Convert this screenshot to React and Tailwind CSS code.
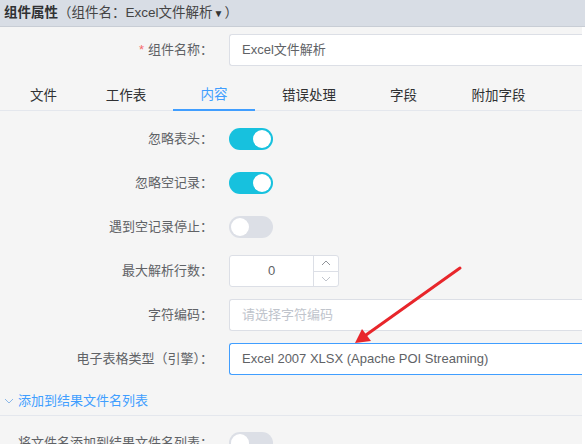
import React from 'react';

const labelCls = "w-[213px] shrink-0 text-right text-[13px] text-[#606266]";

function Toggle({ on }) {
  return (
    <div className={`relative w-[44px] h-[22px] rounded-full ${on ? 'bg-[#17c1de]' : 'bg-[#dcdfe6]'}`}>
      <div className={`absolute top-[2px] w-[18px] h-[18px] rounded-full bg-white ${on ? 'left-[24px]' : 'left-[2px]'}`} />
    </div>
  );
}

function Row({ label, children, required }) {
  return (
    <div className="flex items-center h-[32px] mb-[12px]">
      <div className={labelCls}>
        {required && <span className="text-[#f56c6c] mr-[4px]">*</span>}
        {label}
      </div>
      <div className="ml-[16px] flex-1 flex items-center">{children}</div>
    </div>
  );
}

const tabs = [
  { name: '文件', cls: 'w-[81px]' },
  { name: '工作表', cls: 'w-[84px] mr-[5px]' },
  { name: '内容', cls: 'w-[82px]', active: true },
  { name: '错误处理', cls: 'w-[108px]' },
  { name: '字段', cls: 'w-[81px]' },
  { name: '附加字段', cls: 'w-[109px]' },
];

export default function App() {
  return (
    <div className="relative w-[585px] h-[444px] overflow-hidden bg-[#f5f5f5] font-['Liberation_Sans','Noto_Sans_CJK_SC',sans-serif]">
      {/* header */}
      <div className="h-[27px] bg-[#d8dde5] border-b border-[#c8cdd5] flex items-center pl-[4px] text-[13.5px] text-[#303133]">
        <span className="font-bold">组件属性</span>
        <span className="text-[#444]">（组件名：Excel文件解析</span>
        <span className="text-[10px] text-[#333] mx-[1px]">▼</span>
        <span className="text-[#444]">）</span>
      </div>

      <div className="w-[582px] border-r-[3px] border-white box-content">
        <div className="pt-[7px]">
          <Row label="组件名称：" required>
            <div className="w-full h-[32px] bg-white border border-[#dcdfe6] border-r-0 rounded-l-[3px] flex items-center px-[12px] text-[13px] text-[#606266]">
              Excel文件解析
            </div>
          </Row>
        </div>

        {/* tabs */}
        <div className="flex pl-[3px] h-[33px] border-b border-[#e4e7ed]">
          {tabs.map((t) => (
            <div
              key={t.name}
              className={`${t.cls} h-[33px] pt-[3px] flex items-center justify-center text-[13.5px] ${t.active ? 'text-[#409eff] border-b-2 border-[#409eff]' : 'text-[#303133]'}`}
            >
              {t.name}
            </div>
          ))}
        </div>

        <div className="pt-[12px]">
          <Row label="忽略表头：">
            <Toggle on />
          </Row>
          <Row label="忽略空记录：">
            <Toggle on />
          </Row>
          <Row label="遇到空记录停止：">
            <Toggle />
          </Row>
          <Row label="最大解析行数：">
            <div className="w-[110px] h-[32px] bg-white border border-[#dcdfe6] rounded-[3px] flex">
              <div className="flex-1 flex items-center justify-center text-[13px] text-[#606266]">0</div>
              <div className="w-[25px] border-l border-[#dcdfe6] flex flex-col">
                <div className="flex-1 flex items-center justify-center border-b border-[#dcdfe6]">
                  <svg width="10" height="6" viewBox="0 0 10 6"><path d="M1 5L5 1L9 5" fill="none" stroke="#909399" strokeWidth="1" /></svg>
                </div>
                <div className="flex-1 flex items-center justify-center">
                  <svg width="10" height="6" viewBox="0 0 10 6"><path d="M1 1L5 5L9 1" fill="none" stroke="#c0c4cc" strokeWidth="1" /></svg>
                </div>
              </div>
            </div>
          </Row>
          <Row label="字符编码：">
            <div className="w-full h-[32px] bg-white border border-[#dcdfe6] border-r-0 rounded-l-[3px] flex items-center px-[12px] text-[13px] text-[#c0c4cc]">
              请选择字符编码
            </div>
          </Row>
          <Row label="电子表格类型（引擎）：">
            <div className="w-full h-[32px] bg-white border border-[#409eff] border-r-0 rounded-l-[3px] flex items-center px-[12px] text-[13px] text-[#606266]">
              Excel 2007 XLSX (Apache POI Streaming)
            </div>
          </Row>
        </div>

        <div className="h-[28px] flex items-center pl-[4px] text-[13px] text-[#409eff]">
          <svg width="10" height="6" viewBox="0 0 10 6" className="mr-[4px]"><path d="M1 1L5 5L9 1" fill="none" stroke="#8cb8e8" strokeWidth="1" /></svg>
          添加到结果文件名列表
        </div>
        <div className="border-t border-[#e4e7ed] pt-[11px]">
          <Row label="将文件名添加到结果文件名列表：">
            <Toggle />
          </Row>
        </div>
      </div>

      {/* annotation arrow */}
      <svg className="absolute left-0 top-0 pointer-events-none" width="585" height="444">
        <line x1="460" y1="268" x2="366" y2="335" stroke="#e8262b" strokeWidth="3" strokeLinecap="round" />
        <polygon points="355,343 362,329 371,341" fill="#e8262b" />
      </svg>
    </div>
  );
}
